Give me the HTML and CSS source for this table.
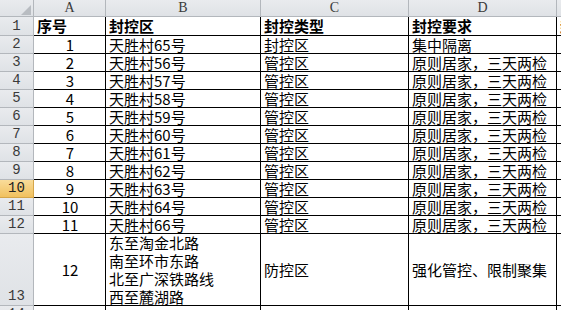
FILE: index.html
```html
<!DOCTYPE html>
<html>
<head>
<meta charset="utf-8">
<link rel="stylesheet" href="styles.css">
</head>
<body>
<div class="sheet">
  <div class="corner"><span class="tri"></span></div>
  <div class="ch">A</div><div class="ch">B</div><div class="ch">C</div><div class="ch">D</div><div class="ch">E</div>

  <div class="rh">1</div><div class="c b">序号</div><div class="c b">封控区</div><div class="c b">封控类型</div><div class="c b">封控要求</div><div class="c b e">封控时间</div>

  <div class="rh">2</div><div class="c n">1</div><div class="c">天胜村65号</div><div class="c">封控区</div><div class="c">集中隔离</div><div class="c e"></div>
  <div class="rh">3</div><div class="c n">2</div><div class="c">天胜村56号</div><div class="c">管控区</div><div class="c">原则居家，三天两检</div><div class="c e"></div>
  <div class="rh">4</div><div class="c n">3</div><div class="c">天胜村57号</div><div class="c">管控区</div><div class="c">原则居家，三天两检</div><div class="c e"></div>
  <div class="rh">5</div><div class="c n">4</div><div class="c">天胜村58号</div><div class="c">管控区</div><div class="c">原则居家，三天两检</div><div class="c e"></div>
  <div class="rh">6</div><div class="c n">5</div><div class="c">天胜村59号</div><div class="c">管控区</div><div class="c">原则居家，三天两检</div><div class="c e"></div>
  <div class="rh">7</div><div class="c n">6</div><div class="c">天胜村60号</div><div class="c">管控区</div><div class="c">原则居家，三天两检</div><div class="c e"></div>
  <div class="rh">8</div><div class="c n">7</div><div class="c">天胜村61号</div><div class="c">管控区</div><div class="c">原则居家，三天两检</div><div class="c e"></div>
  <div class="rh">9</div><div class="c n">8</div><div class="c">天胜村62号</div><div class="c">管控区</div><div class="c">原则居家，三天两检</div><div class="c e"></div>
  <div class="rh sel">10</div><div class="c n">9</div><div class="c">天胜村63号</div><div class="c">管控区</div><div class="c">原则居家，三天两检</div><div class="c e"></div>
  <div class="rh">11</div><div class="c n">10</div><div class="c">天胜村64号</div><div class="c">管控区</div><div class="c">原则居家，三天两检</div><div class="c e"></div>
  <div class="rh">12</div><div class="c n">11</div><div class="c">天胜村66号</div><div class="c">管控区</div><div class="c">原则居家，三天两检</div><div class="c e"></div>

  <div class="rh">13</div><div class="c n mid">12</div><div class="c multi">东至淘金北路<br>南至环市东路<br>北至广深铁路线<br>西至麓湖路</div><div class="c mid">防控区</div><div class="c mid">强化管控、限制聚集</div><div class="c e"></div>

  <div class="rh">14</div><div class="c"></div><div class="c"></div><div class="c"></div><div class="c"></div><div class="c e"></div>
</div>
</body>
</html>
```

FILE: styles.css
```css
html, body {
  margin: 0;
  padding: 0;
  background: #ffffff;
  overflow: hidden;
}

.sheet {
  display: grid;
  grid-template-columns: 34px 72px 155px 148px 148px 60px;
  grid-template-rows: 17px 19px repeat(11, 18px) 72px 18px;
  width: 561px;
  height: 310px;
  overflow: hidden;
  font-family: "Noto Sans CJK SC", "Noto Sans", sans-serif;
  font-size: 15px;
  color: #000;
}

.corner,
.ch,
.rh {
  box-sizing: border-box;
  background: linear-gradient(#e9ebee, #dfe2e6);
  border-right: 1px solid #b3b7bc;
  border-bottom: 1px solid #b3b7bc;
  color: #3a3a3a;
  font-family: "Liberation Mono", "DejaVu Sans Mono", monospace;
  font-size: 14px;
}

.corner {
  position: relative;
}

.tri {
  position: absolute;
  right: 2px;
  bottom: 1px;
  width: 0;
  height: 0;
  border-left: 10px solid transparent;
  border-bottom: 10px solid #b8bcc1;
}

.ch {
  display: flex;
  align-items: center;
  justify-content: center;
  line-height: 16px;
  font-family: "Liberation Serif", "DejaVu Serif", serif;
  font-size: 14px;
}

.rh {
  display: flex;
  align-items: flex-end;
  justify-content: center;
  line-height: 17px;
}

.rh.sel {
  background: linear-gradient(#f9dc9a, #f1c15f);
  border-bottom-color: #d5a64a;
  border-right-color: #d5a64a;
  color: #222;
}

.c {
  box-sizing: border-box;
  border-right: 1px solid #000;
  border-bottom: 1px solid #000;
  padding: 0 2px 0 3px;
  line-height: 17px;
  white-space: nowrap;
  display: flex;
  align-items: flex-end;
}

.c.b {
  font-weight: 700;
  line-height: 18px;
}

.c.n {
  justify-content: center;
}

.c.mid {
  align-items: center;
}

.c.multi {
  display: block;
  line-height: 18px;
  padding-top: 0;
}

.c.e {
  border-right: none;
  overflow: hidden;
}
```
